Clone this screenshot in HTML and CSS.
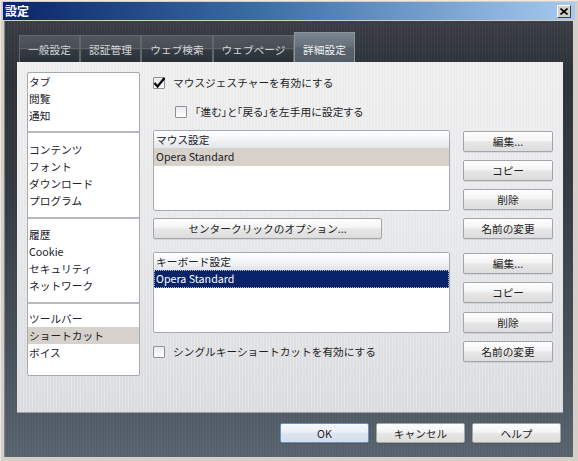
FILE: index.html
```html
<!DOCTYPE html>
<html lang="ja">
<head>
<meta charset="utf-8">
<title>設定</title>
<link rel="stylesheet" href="styles.css">
</head>
<body>
<div class="window">
  <div class="titlebar">
    <span class="title">設定</span>
    <span class="close"><svg width="8" height="7" viewBox="0 0 8 7"><path d="M0.5 0.5 L7.5 6.5 M7.5 0.5 L0.5 6.5" stroke="#000" stroke-width="1.6" fill="none"/></svg></span>
  </div>
  <div class="body">
    <div class="tabs">
      <div class="tab w61">一般設定</div>
      <div class="tab w61">認証管理</div>
      <div class="tab w72">ウェブ検索</div>
      <div class="tab w81">ウェブページ</div>
      <div class="tab w61 active">詳細設定</div>
    </div>
    <div class="panel">
      <div class="nav">
        <div class="nav-section first">
          <div class="nav-item">タブ</div>
          <div class="nav-item">閲覧</div>
          <div class="nav-item">通知</div>
        </div>
        <div class="nav-section second">
          <div class="nav-item">コンテンツ</div>
          <div class="nav-item">フォント</div>
          <div class="nav-item">ダウンロード</div>
          <div class="nav-item">プログラム</div>
        </div>
        <div class="nav-section">
          <div class="nav-item">履歴</div>
          <div class="nav-item">Cookie</div>
          <div class="nav-item">セキュリティ</div>
          <div class="nav-item">ネットワーク</div>
        </div>
        <div class="nav-section last">
          <div class="nav-item">ツールバー</div>
          <div class="nav-item selected">ショートカット</div>
          <div class="nav-item">ボイス</div>
        </div>
      </div>
      <div class="middle">
        <div class="check-row">
          <span class="checkbox"><svg class="tick" width="13" height="12" viewBox="0 0 13 12"><path d="M1.5 6 L4.5 9.5 L11.5 1" stroke="#000" stroke-width="2.2" fill="none"/></svg></span>
          <span>マウスジェスチャーを有効にする</span>
        </div>
        <div class="check-row indent">
          <span class="checkbox"></span>
          <span class="palt">「進む」と「戻る」を左手用に設定する</span>
        </div>
        <div class="listbox">
          <div class="list-head">マウス設定</div>
          <div class="list-row hl">Opera Standard</div>
        </div>
        <div class="btn center-btn">センタークリックのオプション...</div>
        <div class="listbox kb">
          <div class="list-head">キーボード設定</div>
          <div class="list-row sel">Opera Standard</div>
        </div>
        <div class="check-row cb3">
          <span class="checkbox"></span>
          <span>シングルキーショートカットを有効にする</span>
        </div>
      </div>
      <div class="side">
        <div class="btn">編集...</div>
        <div class="btn">コピー</div>
        <div class="btn">削除</div>
        <div class="btn">名前の変更</div>
        <div class="btn g2">編集...</div>
        <div class="btn">コピー</div>
        <div class="btn m9">削除</div>
        <div class="btn">名前の変更</div>
      </div>
    </div>
    <div class="footer">
      <div class="btn default">OK</div>
      <div class="btn">キャンセル</div>
      <div class="btn">ヘルプ</div>
    </div>
  </div>
</div>
</body>
</html>
```
FILE: styles.css
```css
html, body {
  margin: 0;
  padding: 0;
}
body {
  width: 578px;
  height: 461px;
  overflow: hidden;
  background: #d4d0c8;
  font-family: "Noto Sans CJK JP", "Noto Sans", sans-serif;
  font-size: 10.7px;
  color: #1e1e1e;
}
.window {
  width: 578px;
  height: 461px;
  box-sizing: border-box;
  padding: 2px 3px 4px 3px;
  display: flex;
  flex-direction: column;
  background: #d4d0c8;
  border-top: 1px solid #ece9e2;
  border-left: 1px solid #ece9e2;
}
.titlebar {
  height: 18px;
  flex: none;
  margin-top: -1px;
  margin-left: -1px;
  background: linear-gradient(90deg, #0a246a 0%, #3a6ea5 45%, #a6caf0 100%);
  display: flex;
  align-items: center;
  justify-content: space-between;
  padding: 0 4px 0 2px;
}
.title {
  color: #fff;
  font-weight: bold;
  font-size: 12px;
  line-height: 18px;
}
.close {
  width: 14px;
  height: 13px;
  box-sizing: border-box;
  background: #d4d0c8;
  border: 1px solid;
  border-color: #ffffff #404040 #404040 #ffffff;
  display: flex;
  align-items: center;
  justify-content: center;
}
.body {
  flex: 1;
  margin: 1px 2px 0 0;
  padding: 11px 11px 0 12px;
  box-sizing: border-box;
  border-left: 1px solid #7d838a;
  background:
    repeating-linear-gradient(90deg, rgba(255,255,255,0.035) 0 1px, rgba(0,0,0,0) 1px 3px),
    linear-gradient(180deg, #3a3e44 0%, #2c3137 12%, #343a41 40%, #46505a 75%, #57626d 100%);
}
.tabs {
  height: 30px;
  display: flex;
  align-items: flex-end;
  padding-left: 2px;
}
.tab {
  height: 27px;
  box-sizing: border-box;
  border: 1px solid #62676e;
  border-bottom: none;
  color: #d3d7db;
  display: flex;
  align-items: center;
  justify-content: center;
  background: linear-gradient(180deg, #52575d 0%, #494e54 44%, #5c6167 48%, #363b41 53%, #2b3036 100%);
}
.tab.w61 { width: 61px; }
.tab.w72 { width: 72px; }
.tab.w81 { width: 81px; }
.tab.active {
  height: 30px;
  padding-top: 3px;
  color: #f2f4f6;
  border-color: #8c949c;
  background: linear-gradient(180deg, #7a848e 0%, #68727c 45%, #5a646e 52%, #535d67 100%);
}
.panel {
  width: 546px;
  height: 350px;
  box-sizing: border-box;
  padding: 10px 9px 0 10px;
  display: flex;
  gap: 13px;
  box-shadow: 0 1px 0 #98a0a8;
  background:
    repeating-linear-gradient(90deg, rgba(255,255,255,0.25) 0 1px, rgba(0,0,0,0) 1px 3px),
    linear-gradient(180deg, #ededee 0%, #e6e7e9 50%, #d9dbde 100%);
}
.nav {
  width: 113px;
  height: 304px;
  box-sizing: border-box;
  border: 1px solid #a5a9ae;
  border-radius: 2px;
  background: #fff;
  display: flex;
  flex-direction: column;
  flex: none;
}
.nav-section {
  padding: 7px 0 8px;
  border-top: 2px solid #b7b9bc;
}
.nav-section.first {
  padding-top: 0;
  padding-bottom: 7px;
  border-top: none;
}
.nav-section.second {
  padding-top: 8px;
}
.nav-section.last {
  padding-top: 6px;
}
.nav-item {
  height: 17px;
  line-height: 17px;
  padding-left: 1px;
  color: #20202a;
  white-space: nowrap;
}
.nav-item.selected {
  background: #d6d1ca;
}
.middle {
  width: 297px;
  display: flex;
  flex-direction: column;
  flex: none;
}
.side {
  width: 90px;
  display: flex;
  flex-direction: column;
  padding-top: 59px;
  flex: none;
}
.check-row {
  height: 21px;
  display: flex;
  align-items: center;
  gap: 8px;
  white-space: nowrap;
}
.check-row.indent {
  padding-left: 22px;
  margin-top: 8px;
}
.check-row.cb3 {
  margin-top: 8px;
}
.palt {
  font-feature-settings: "palt";
  letter-spacing: 0.2px;
}
.checkbox {
  width: 12px;
  height: 12px;
  box-sizing: border-box;
  border: 1px solid #8e9297;
  border-radius: 1px;
  background: linear-gradient(180deg, #e9eaec 0%, #ffffff 100%);
  position: relative;
  flex: none;
}
.tick {
  position: absolute;
  left: -1px;
  top: -1px;
  overflow: visible;
}
.listbox {
  height: 81px;
  box-sizing: border-box;
  margin-top: 8px;
  border: 1px solid #a6aaaf;
  border-radius: 2px;
  background: #fff;
}
.listbox.kb {
  margin-top: 13px;
}
.list-head {
  height: 17px;
  line-height: 17px;
  padding-left: 2px;
  background: linear-gradient(180deg, #ffffff 0%, #f2f4f6 50%, #e3e6ea 100%);
  color: #20202a;
}
.list-row {
  height: 18px;
  line-height: 18px;
  padding-left: 2px;
  color: #20202a;
}
.list-row.hl {
  background: #d6d1c9;
}
.list-row.sel {
  background: #0a246a;
  color: #ffffff;
  outline: 1px dotted #b8bcc8;
  outline-offset: -1px;
}
.btn {
  height: 21px;
  box-sizing: border-box;
  border: 1px solid #a2a6ab;
  border-radius: 2px;
  background: linear-gradient(180deg, #fefefe 0%, #f4f4f4 45%, #e7e7e7 52%, #dddddd 100%);
  box-shadow: 0 1px 0 rgba(0, 0, 0, 0.08);
  display: flex;
  align-items: center;
  justify-content: center;
  color: #1e1e1e;
  white-space: nowrap;
}
.side .btn + .btn {
  margin-top: 8px;
}
.side .btn.g2 {
  margin-top: 14px;
}
.side .btn.m9 {
  margin-top: 9px;
}
.center-btn {
  width: 229px;
  margin-top: 7px;
}
.footer {
  display: flex;
  justify-content: flex-end;
  gap: 7px;
  margin-top: 11px;
  padding-right: 1px;
}
.footer .btn {
  width: 89px;
  height: 20px;
}
.btn.default {
  border-color: #6f8fbd;
  background: linear-gradient(180deg, #f6f9fd 0%, #eaf0f8 45%, #dce6f2 52%, #d3ddec 100%);
}
```
